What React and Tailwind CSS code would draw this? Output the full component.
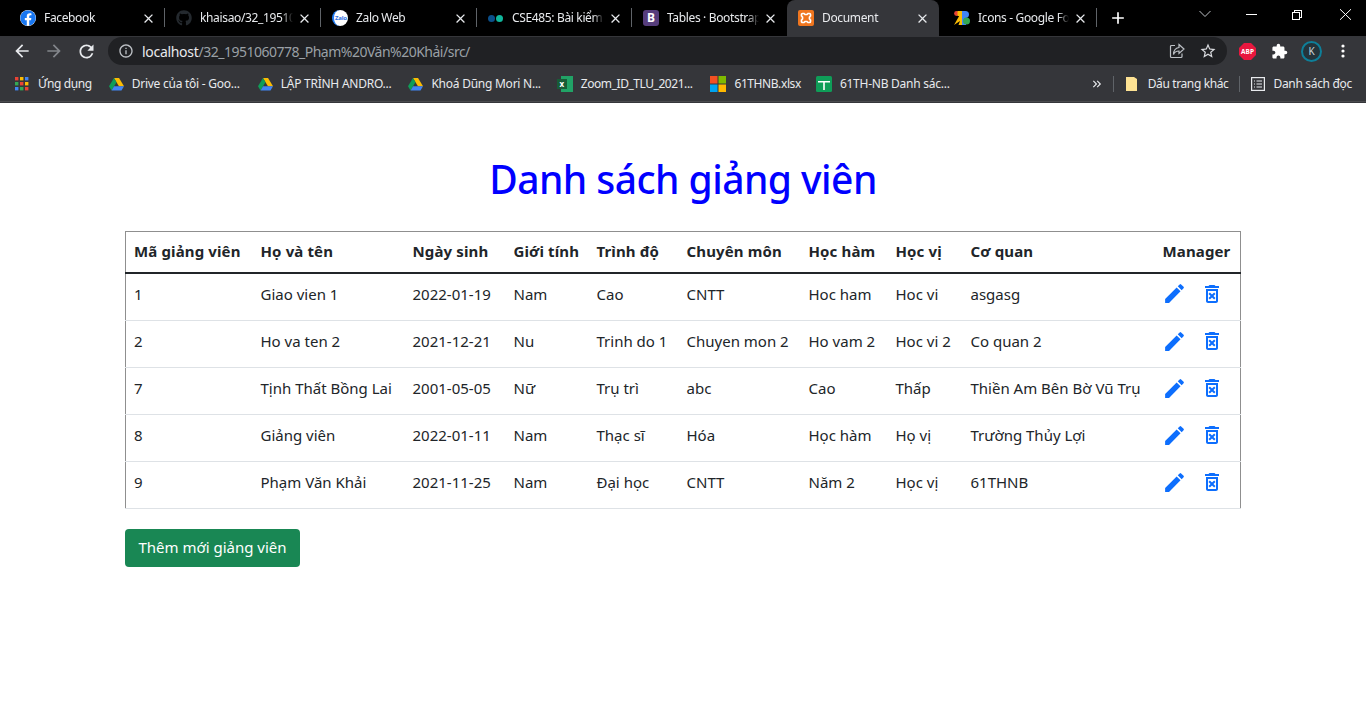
import React from "react";
import { FaFacebook, FaGithub } from "react-icons/fa";
import { MdEdit, MdOutlineDeleteForever, MdArrowBack, MdArrowForward, MdRefresh, MdInfoOutline, MdStarBorder, MdExtension, MdClose, MdAdd, MdKeyboardDoubleArrowRight } from "react-icons/md";

const Drive = () => (
  <svg width="15" height="14" viewBox="0 0 16 14" className="shrink-0">
    <path d="M5.3 0.5h5.4L16 9.500h-5.4z" fill="#fbbc04" />
    <path d="M5.300 0.500L0 9.500l2.700 4.500L8 5z" fill="#0f9d58" />
    <path d="M5.400 9.500H16l-2.700 4.500H2.700z" fill="#4285f4" />
  </svg>
);
const Tab = ({ icon, title, active, sep = true, w = "w-[156px]", pad = "pl-[11px]" }) => (
  <div className={`relative flex h-[36px] shrink-0 items-center pr-[9px] ${pad} ${w} ${active ? "rounded-t-[8px] bg-[#35363a]" : ""}`}>
    <span className="flex w-[24px] shrink-0 items-center">{icon}</span>
    <span className="min-w-0 flex-1 overflow-hidden whitespace-nowrap text-[12px] tracking-[-0.35px] text-[#e8eaed] [mask-image:linear-gradient(to_right,#000_88%,transparent)]">{title}</span>
    <MdClose className="ml-1 shrink-0 text-[#e8eaed]" size={15} />
    {sep && <span className="absolute right-0 top-[8px] h-[19px] w-px bg-[#5f6368]" />}
  </div>
);
const Mark = ({ icon, label, cls = "" }) => (
  <div className={`flex shrink-0 items-center gap-[8px] ${cls}`}>
    {icon}
    <span className="whitespace-nowrap text-[12px] text-[#e8eaed]">{label}</span>
  </div>
);
const columns = ["w-[126px]", "w-[152px]", "w-[101px]", "w-[83px]", "w-[90px]", "w-[122px]", "w-[87px]", "w-[75px]", "w-[192px]", "w-[87px]"];
const head = ["Mã giảng viên", "Họ và tên", "Ngày sinh", "Giới tính", "Trình độ", "Chuyên môn", "Học hàm", "Học vị", "Cơ quan", "Manager"];
const rows = [
  ["1", "Giao vien 1", "2022-01-19", "Nam", "Cao", "CNTT", "Hoc ham", "Hoc vi", "asgasg"],
  ["2", "Ho va ten 2", "2021-12-21", "Nu", "Trinh do 1", "Chuyen mon 2", "Ho vam 2", "Hoc vi 2", "Co quan 2"],
  ["7", "Tịnh Thất Bồng Lai", "2001-05-05", "Nữ", "Trụ trì", "abc", "Cao", "Thấp", "Thiền Am Bên Bờ Vũ Trụ"],
  ["8", "Giảng viên", "2022-01-11", "Nam", "Thạc sĩ", "Hóa", "Học hàm", "Họ vị", "Trường Thủy Lợi"],
  ["9", "Phạm Văn Khải", "2021-11-25", "Nam", "Đại học", "CNTT", "Năm 2", "Học vị", "61THNB"],
];
export default function App() {
  return (
    <div className="min-h-[728px] bg-white font-['Noto_Sans','Open_Sans',sans-serif]">
      <div className="h-[103px] bg-[#35363a]">
        <div className="flex h-[36px] items-center bg-black">
          <Tab pad="pl-[20px]" icon={<FaFacebook size={16} className="rounded-full bg-white text-[#1877f2]" />} title="Facebook" w="w-[165px]" />
          <Tab icon={<FaGithub size={16} className="text-[#24292e]" />} title="khaisao/32_1951060778" w="w-[156px]" />
          <Tab icon={<span className="flex h-[16px] w-[16px] items-center justify-center rounded-full border-l-2 border-[#1f7cf5] bg-white text-[6px] font-bold tracking-[-0.2px] text-[#2f6fe0]">Zalo</span>} title="Zalo Web" w="w-[156px]" />
          <Tab icon={<span className="flex gap-px"><i className="block h-[7px] w-[7px] rounded-full bg-[#0b4f8a]" /><i className="block h-[7px] w-[7px] rounded-full bg-[#10b79c]" /></span>} title="CSE485: Bài kiểm tra" w="w-[155px]" />
          <Tab icon={<span className="flex h-[16px] w-[16px] items-center justify-center rounded-[3px] bg-[#563d7c] text-[12px] font-bold text-white">B</span>} title="Tables · Bootstrap v5" w="w-[155px]" sep={false} />
          <Tab active sep={false} icon={<span className="flex h-[16px] w-[16px] items-center justify-center rounded-[2px] bg-[#f0761f]"><svg width="12" height="12" viewBox="0 0 12 12" fill="none" stroke="#fff" strokeWidth="1.7"><path d="M1.500 4V2.500A1 1 0 0 1 2.500 1.500H4l1 1h2l1-1h1.500a1 1 0 0 1 1 1V4l-1 1v2l1 1v1.500a1 1 0 0 1-1 1H8l-1-1H5l-1 1H2.500a1 1 0 0 1-1-1V8l1-1V5z" /></svg></span>} title="Document" w="w-[152px]" />
          <Tab pad="pl-[15px]" sep icon={<svg width="16" height="14" viewBox="0 0 16 14"><circle cx="2.500" cy="2.500" r="2.400" fill="#ea4335" /><path d="M0 14L6 3.500 8 3v11H4.500L6 10z" fill="#fbbc04" /><path d="M3.500 0H8v5H3.500z" fill="#fbbc04" /><path d="M8 0h3.500a3 3 0 0 1 0 7H8z" fill="#4285f4" /><path d="M8 7h4v7H8z" fill="#4285f4" /><circle cx="12.500" cy="10" r="3.500" fill="#34a853" /></svg>} title="Icons - Google Fonts" w="w-[158px]" />
          <MdAdd className="ml-[11px] text-white" size={20} />
          <div className="ml-auto flex h-full items-start text-[#e8eaed]">
            <svg width="12" height="8" viewBox="0 0 12 8" fill="none" stroke="#bdc1c6" strokeWidth="1" className="mr-[35px] mt-[10px]"><path d="M0.500 1L6 6.500 11.500 1" /></svg>
            <div className="mr-[35px] mt-[14px] h-px w-[11px] bg-white" />
            <div className="relative mr-[37px] mt-[10px] h-[10px] w-[10px]">
              <span className="absolute right-0 top-0 h-[8px] w-[8px] border border-white" />
              <span className="absolute bottom-0 left-0 h-[8px] w-[8px] border border-white bg-black" />
            </div>
            <svg width="13" height="11" viewBox="0 0 13 11" fill="none" stroke="#fff" strokeWidth="1" className="mr-[14px] mt-[9px]"><path d="M1 0.200L12 10.800M12 0.200L1 10.800" /></svg>
          </div>
        </div>
        <div className="flex h-[30px] items-center">
          <MdArrowBack size={20} className="ml-[12px] text-[#e8eaed]" />
          <MdArrowForward size={20} className="ml-[12px] text-[#83868b]" />
          <MdRefresh size={21} className="ml-[12px] text-[#e8eaed]" />
          <div className="ml-[11px] flex h-[28px] w-[1119px] items-center rounded-full bg-[#202124]">
            <MdInfoOutline size={16} className="ml-[10px] text-[#bdc1c6]" />
            <span className="ml-[8px] whitespace-nowrap text-[14px] tracking-[-0.3px] text-[#e8eaed]">localhost<span className="tracking-[-0.5px] text-[#9aa0a6]">/32_1951060778_Phạm%20Văn%20Khải/src/</span></span>
            <svg width="16" height="16" viewBox="0 0 16 16" fill="none" stroke="#bdc1c6" strokeWidth="1.200" className="ml-auto">
              <path d="M6 2.500H2.500A1 1 0 0 0 1.500 3.500v10a1 1 0 0 0 1 1h9.500a1 1 0 0 0 1-1V10.500" />
              <path d="M10 1.500l5 4.500-5 4.500V8C7.500 8 5.500 9 4.500 11.500 4.500 7.500 7 5 10 4.500z" />
            </svg>
            <MdStarBorder size={18} className="ml-[14px] mr-[10px] text-[#dadce0]" />
          </div>
          <svg width="17" height="17" viewBox="0 0 17 17" className="ml-[12px]">
            <path d="M5 0h7l5 5v7l-5 5H5l-5-5V5z" fill="#e8173e" />
            <text x="8.500" y="11" textAnchor="middle" fontSize="6.500" fontWeight="700" fill="#fff">ABP</text>
          </svg>
          <MdExtension size={17} className="ml-[15px] text-white" />
          <span className="ml-[13px] flex h-[21px] w-[21px] items-center justify-center rounded-full border-2 border-[#0e7f99] bg-[#24343b] text-[10px] text-[#cfd8dc]">K</span>
          <svg width="4" height="14" viewBox="0 0 4 14" className="ml-[19px]" fill="#fff"><circle cx="2" cy="2" r="1.600" /><circle cx="2" cy="7" r="1.600" /><circle cx="2" cy="12" r="1.600" /></svg>
        </div>
        <div className="flex h-[36px] items-center border-b border-[#4a4b4e] pt-[1px]">
          <Mark cls="ml-[15px] gap-[9px] tracking-[-0.4px]" icon={<svg width="14" height="14" viewBox="0 0 14 14">{["#ea4335","#fbbc04","#4285f4","#34a853","#ea4335","#fbbc04","#4285f4","#34a853","#ea4335"].map((c,i)=><rect key={i} x={(i%3)*5} y={Math.floor(i/3)*5} width="3.400" height="3.400" fill={c}/>)}</svg>} label="Ứng dụng" />
          <Mark cls="ml-[17px] tracking-[-0.25px]" icon={<Drive />} label="Drive của tôi - Goo..." />
          <Mark cls="ml-[18px] tracking-[-0.25px]" icon={<Drive />} label="LẬP TRÌNH ANDRO..." />
          <Mark cls="ml-[17px] tracking-[-0.25px]" icon={<Drive />} label="Khoá Dũng Mori N..." />
          <Mark cls="ml-[16px] tracking-[-0.45px]" icon={<svg width="16" height="16" viewBox="0 0 16 16"><rect x="4" y="0" width="12" height="16" fill="#21a366"/><rect x="0" y="3" width="10" height="10" fill="#185c37"/><text x="2.500" y="11" fontSize="8" fontWeight="700" fill="#fff">x</text></svg>} label="Zoom_ID_TLU_2021..." />
          <Mark cls="ml-[18px] tracking-[-0.4px]" icon={<svg width="16" height="16" viewBox="0 0 16 16"><rect width="7.500" height="7.500" fill="#f25022"/><rect x="8.500" width="7.500" height="7.500" fill="#7fba00"/><rect y="8.500" width="7.500" height="7.500" fill="#00a4ef"/><rect x="8.500" y="8.500" width="7.500" height="7.500" fill="#ffb900"/></svg>} label="61THNB.xlsx" />
          <Mark cls="ml-[15px] tracking-[-0.25px]" icon={<svg width="16" height="16" viewBox="0 0 16 16"><rect width="16" height="16" rx="1.500" fill="#0f9d58"/><path d="M2 5h12v1.500H8.800V14H7.200V6.500H2z" fill="#fff"/></svg>} label="61TH-NB Danh sác..." />
          <MdKeyboardDoubleArrowRight size={14} className="ml-auto text-[#e8eaed]" />
          <span className="ml-[9px] h-[16px] w-px bg-[#5f6368]" />
          <Mark cls="ml-[12px] gap-[10px] tracking-[-0.37px]" icon={<svg width="12" height="14" viewBox="0 0 12 14"><path d="M0 0h8l3 2v12H0z" fill="#fde293"/></svg>} label="Dấu trang khác" />
          <span className="ml-[10px] h-[16px] w-px bg-[#5f6368]" />
          <Mark cls="ml-[11px] mr-[14px] gap-[9px] tracking-[-0.32px]" icon={<svg width="14" height="14" viewBox="0 0 14 14" fill="none" stroke="#e8eaed" strokeWidth="1.200"><rect x="0.600" y="0.600" width="12.800" height="12.800"/><path d="M3 4h1M5.500 4H11M3 7h1M5.500 7H11M3 10h1M5.500 10H11"/></svg>} label="Danh sách đọc" />
        </div>
      </div>
      <div className="px-[125px]">
        <h1 className="mt-[48px] mb-[24px] text-center text-[39px] leading-[56px] font-medium tracking-[-0.55px] text-[#0000ff]">Danh sách giảng viên</h1>
        <table className="w-[1116px] table-fixed border border-[#8f8f8f] border-b-0 text-[15px] text-[#212529]">
          <colgroup>{columns.map((c, i) => <col key={i} className={c} />)}</colgroup>
          <thead>
            <tr className="h-[41px] border-b-2 border-[#212529]">
              {head.map((h, i) => <th key={h} className={`whitespace-nowrap pb-[2px] pr-[8px] text-left font-bold tracking-[0.13px] ${i === 0 ? "pl-[8px]" : "pl-[9px]"}`}>{h}</th>)}
            </tr>
          </thead>
          <tbody>
            {rows.map((r, n) => (
              <tr key={r[0]} className={`border-b border-[#dee2e6] ${n === 0 ? "h-[48px]" : "h-[47px]"}`}>
                {r.map((c, i) => <td key={i} className={`whitespace-nowrap pb-[6px] pr-[8px] ${i === 0 ? "pl-[8px]" : "pl-[9px]"}`}>{c}</td>)}
                <td className="pb-[6px] pl-[8px]">
                  <div className="flex items-center gap-[13px] text-[#0d6efd]">
                    <MdEdit size={25} />
                    <MdOutlineDeleteForever size={24} />
                  </div>
                </td>
              </tr>
            ))}
          </tbody>
        </table>
        <button className="mt-[20px] h-[38px] w-[175px] rounded-[4px] bg-[#198754] pb-[1px] text-[15px] text-white">Thêm mới giảng viên</button>
      </div>
    </div>
  );
}
